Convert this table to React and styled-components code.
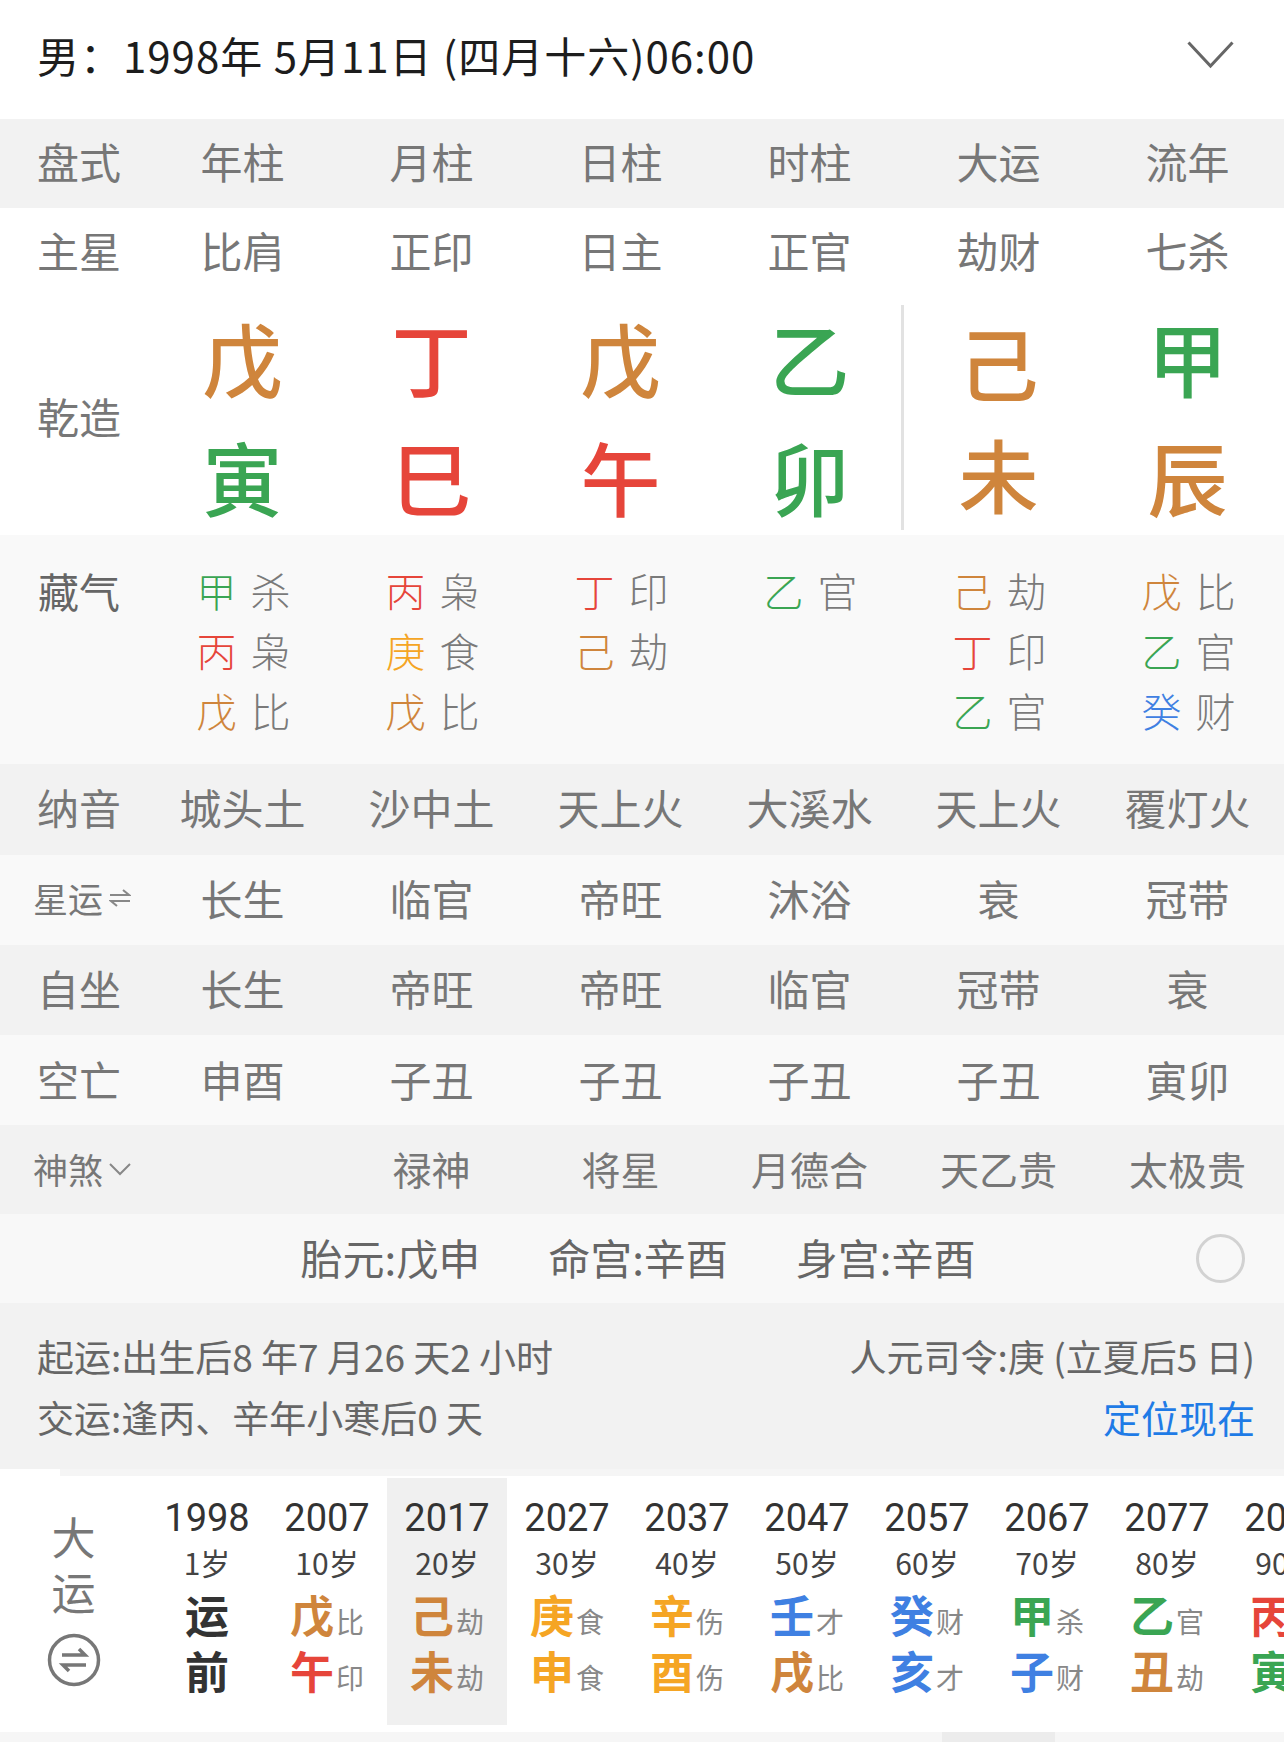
import React from 'react';
import styled, { createGlobalStyle } from 'styled-components';

const GlobalStyle = createGlobalStyle`
  body {
    margin: 0;
    background: #fff;
    font-family: "Noto Sans CJK SC", "Noto Sans", sans-serif;
  }
`;

const COLORS = {
  wood: '#3aa553',
  fire: '#e6453a',
  earth: '#cf853c',
  metal: '#f5a524',
  water: '#3f80e2',
};

const ELEMENT = {
  甲: 'wood', 乙: 'wood', 寅: 'wood', 卯: 'wood',
  丙: 'fire', 丁: 'fire', 巳: 'fire', 午: 'fire',
  戊: 'earth', 己: 'earth', 辰: 'earth', 戌: 'earth', 丑: 'earth', 未: 'earth',
  庚: 'metal', 辛: 'metal', 申: 'metal', 酉: 'metal',
  壬: 'water', 癸: 'water', 子: 'water', 亥: 'water',
};

const colorOf = (ch) => COLORS[ELEMENT[ch]] || '#333';

const Page = styled.div`
  width: 1284px;
  overflow: hidden;
`;

const Header = styled.div`
  height: 119px;
  display: flex;
  align-items: center;
  justify-content: space-between;
  padding: 0 50px 10px 37px;
  box-sizing: border-box;
`;

const Title = styled.div`
  font-size: 42px;
  color: #1d1d1d;
  letter-spacing: 1px;
`;

const Row = styled.div`
  display: grid;
  grid-template-columns: 148px repeat(6, 189px);
  height: ${p => p.$h || 90}px;
  background: ${p => p.$bg || '#fff'};
  align-items: center;
  padding-bottom: ${p => p.$pb ?? 5}px;
  box-sizing: border-box;
`;

const Label = styled.div`
  padding-left: ${p => p.$pl || 10}px;
  text-align: center;
  font-size: ${p => p.$size || 42}px;
  color: ${p => p.$color || '#777'};
  line-height: ${p => p.$lh || 1};
  display: flex;
  align-items: center;
  justify-content: center;
`;

const Cell = styled.div`
  text-align: center;
  font-size: ${p => p.$size || 42}px;
  color: #777;
  line-height: 1;
`;

const Pillars = styled.div`
  display: grid;
  grid-template-columns: 148px repeat(6, 189px);
  height: 238px;
  background: #fff;
`;

const PillarCol = styled.div`
  display: grid;
  grid-template-rows: 117px 121px;
  align-items: center;
  justify-items: center;
  ${p => p.$divider && `
    border-left: 3px solid #e2e2e2;
    margin: 8px 0 5px -3px;
    grid-template-rows: 109px 116px;
  `}
`;

const BigChar = styled.div`
  font-size: 80px;
  font-weight: 500;
  line-height: 1;
  color: ${p => p.$color};
`;

const Hidden = styled.div`
  display: grid;
  grid-template-columns: 148px repeat(6, 189px);
  height: 229px;
  background: #f9f9f9;
  padding-top: 25px;
  box-sizing: border-box;
  align-items: start;
`;

const HiddenList = styled.div`
  display: flex;
  flex-direction: column;
  align-items: center;
`;

const HiddenLine = styled.div`
  font-size: 40px;
  line-height: 60px;
  color: #7a7a7a;
  font-weight: 300;
  padding-left: 2px;
`;

const HiddenStem = styled.span`
  color: ${p => p.$color};
  margin-right: 14px;
`;

const IconInline = styled.svg`
  margin-left: 6px;
  flex-shrink: 0;
`;

const InfoRow = styled.div`
  display: grid;
  grid-template-columns: 1fr auto 1fr;
  align-items: center;
  height: 89px;
  background: #f8f8f8;
`;

const InfoGroup = styled.div`
  grid-column: 2;
  display: flex;
  gap: 68px;
  font-size: 42px;
  color: #666;
  padding-bottom: 4px;
  margin-left: -8px;
`;

const Toggle = styled.div`
  justify-self: end;
  margin-right: 39px;
  width: 49px;
  height: 49px;
  border: 3px solid #d2d2d2;
  border-radius: 50%;
  box-sizing: border-box;
`;

const Luck = styled.div`
  height: 166px;
  background: #f2f2f2;
  padding: 31px 29px 0 37px;
  box-sizing: border-box;
  color: #666;
  font-size: 37px;
`;

const LuckLine = styled.div`
  display: flex;
  justify-content: space-between;
  align-items: baseline;
  line-height: 44px;
  margin-top: ${p => p.$mt || 0}px;
`;

const Locate = styled.span`
  color: #1f7be6;
  font-size: 38px;
`;

const Dayun = styled.div`
  height: 256px;
  background: #fff;
`;

const DayunStrip = styled.div`
  height: 7px;
  background: #f5f5f5;
  display: flex;
`;

const StripWhite = styled.div`
  width: 60px;
  background: #fff;
`;

const DayunBody = styled.div`
  display: flex;
  height: 249px;
`;

const DayunLabel = styled.div`
  width: 147px;
  flex-shrink: 0;
  display: flex;
  flex-direction: column;
  align-items: center;
  padding-top: 38px;
  box-sizing: border-box;
`;

const DayunLabelChar = styled.div`
  font-size: 44px;
  line-height: 44px;
  color: #777;
  margin-bottom: ${p => p.$mb || 0}px;
`;

const CircleIcon = styled.svg`
  margin-top: 20px;
`;

const DayunScroll = styled.div`
  display: flex;
  overflow: hidden;
  flex: 1;
`;

const DayunCol = styled.div`
  width: 120px;
  flex-shrink: 0;
  margin-top: 2px;
  display: flex;
  flex-direction: column;
  align-items: center;
  background: ${p => (p.$active ? '#f0f0f0' : 'transparent')};
  padding-top: 18px;
  box-sizing: border-box;
`;

const Year = styled.div`
  font-family: Roboto, "Noto Sans CJK SC", sans-serif;
  font-size: 38px;
  line-height: 44px;
  color: #333;
`;

const Age = styled.div`
  font-size: 30px;
  line-height: 44px;
  color: #444;
`;

const GanZhi = styled.div`
  display: flex;
  align-items: baseline;
  justify-content: center;
  height: 56px;
  padding-top: 6px;
  box-sizing: border-box;
  margin-top: ${p => p.$mt || 0}px;
`;

const GanChar = styled.span`
  font-size: 44px;
  line-height: 1;
  font-weight: 700;
  color: ${p => p.$color};
`;

const GodChar = styled.span`
  font-size: 28px;
  line-height: 1;
  color: #888;
  margin-left: 2px;
`;

const Bottom = styled.div`
  height: 17px;
  background: #f6f6f6;
`;

const BottomBar = styled.div`
  margin-left: 942px;
  margin-top: 7px;
  width: 113px;
  height: 10px;
  background: #ececec;
`;

const Chevron = () => (
  <svg width="47" height="28" viewBox="0 0 47 28">
    <polyline points="1.5,1.5 23.5,25 45.5,1.5" fill="none" stroke="#666" strokeWidth="3" />
  </svg>
);

const SwapIcon = () => (
  <IconInline width="22" height="20" viewBox="0 0 22 20">
    <path d="M1 7 H20 L14 2" fill="none" stroke="#888" strokeWidth="2" />
    <path d="M21 13 H2 L8 18" fill="none" stroke="#888" strokeWidth="2" />
  </IconInline>
);

const DownIcon = () => (
  <IconInline width="22" height="14" viewBox="0 0 22 14">
    <polyline points="1,2 11,12 21,2" fill="none" stroke="#888" strokeWidth="2" />
  </IconInline>
);

const headers = ['年柱', '月柱', '日柱', '时柱', '大运', '流年'];
const mainStars = ['比肩', '正印', '日主', '正官', '劫财', '七杀'];
const stems = ['戊', '丁', '戊', '乙', '己', '甲'];
const branches = ['寅', '巳', '午', '卯', '未', '辰'];
const hidden = [
  [['甲', '杀'], ['丙', '枭'], ['戊', '比']],
  [['丙', '枭'], ['庚', '食'], ['戊', '比']],
  [['丁', '印'], ['己', '劫']],
  [['乙', '官']],
  [['己', '劫'], ['丁', '印'], ['乙', '官']],
  [['戊', '比'], ['乙', '官'], ['癸', '财']],
];

const tableRows = [
  { label: '纳音', bg: '#f2f2f2', h: 91, values: ['城头土', '沙中土', '天上火', '大溪水', '天上火', '覆灯火'] },
  { label: '星运', icon: 'swap', bg: '#f9f9f9', values: ['长生', '临官', '帝旺', '沐浴', '衰', '冠带'] },
  { label: '自坐', bg: '#f2f2f2', values: ['长生', '帝旺', '帝旺', '临官', '冠带', '衰'] },
  { label: '空亡', bg: '#f9f9f9', pb: 3, values: ['申酉', '子丑', '子丑', '子丑', '子丑', '寅卯'] },
  { label: '神煞', icon: 'down', bg: '#f2f2f2', h: 89, pb: 2, size: 39, values: ['', '禄神', '将星', '月德合', '天乙贵', '太极贵'] },
];

const dayun = [
  { year: '1998', age: '1岁', pre: true },
  { year: '2007', age: '10岁', gan: ['戊', '比'], zhi: ['午', '印'] },
  { year: '2017', age: '20岁', gan: ['己', '劫'], zhi: ['未', '劫'], active: true },
  { year: '2027', age: '30岁', gan: ['庚', '食'], zhi: ['申', '食'] },
  { year: '2037', age: '40岁', gan: ['辛', '伤'], zhi: ['酉', '伤'] },
  { year: '2047', age: '50岁', gan: ['壬', '才'], zhi: ['戌', '比'] },
  { year: '2057', age: '60岁', gan: ['癸', '财'], zhi: ['亥', '才'] },
  { year: '2067', age: '70岁', gan: ['甲', '杀'], zhi: ['子', '财'] },
  { year: '2077', age: '80岁', gan: ['乙', '官'], zhi: ['丑', '劫'] },
  { year: '2087', age: '90岁', gan: ['丙', '枭'], zhi: ['寅', '枭'] },
];

export default function App() {
  return (
    <Page>
      <GlobalStyle />
      <Header>
        <Title>男：1998年 5月11日 (四月十六)06:00</Title>
        <Chevron />
      </Header>

      <Row $bg="#f2f2f2" $h={89}>
        <Label>盘式</Label>
        {headers.map(h => <Cell key={h}>{h}</Cell>)}
      </Row>

      <Row $h={89}>
        <Label>主星</Label>
        {mainStars.map((s, i) => <Cell key={i}>{s}</Cell>)}
      </Row>

      <Pillars>
        <Label>乾造</Label>
        {stems.map((s, i) => (
          <PillarCol key={i} $divider={i === 4}>
            <BigChar $color={colorOf(s)}>{s}</BigChar>
            <BigChar $color={colorOf(branches[i])}>{branches[i]}</BigChar>
          </PillarCol>
        ))}
      </Pillars>

      <Hidden>
        <Label $color="#666" $lh="60px" $size={41}>藏气</Label>
        {hidden.map((list, i) => (
          <HiddenList key={i}>
            {list.map(([stem, god], j) => (
              <HiddenLine key={j}>
                <HiddenStem $color={colorOf(stem)}>{stem}</HiddenStem>{god}
              </HiddenLine>
            ))}
          </HiddenList>
        ))}
      </Hidden>

      {tableRows.map(r => (
        <Row key={r.label} $bg={r.bg} $h={r.h || 90} $pb={r.pb}>
          <Label $size={r.icon ? 35 : 42} $pl={r.icon ? 16 : 10}>
            {r.label}
            {r.icon === 'swap' && <SwapIcon />}
            {r.icon === 'down' && <DownIcon />}
          </Label>
          {r.values.map((v, i) => <Cell key={i} $size={r.size}>{v}</Cell>)}
        </Row>
      ))}

      <InfoRow>
        <InfoGroup>
          <span>胎元:戊申</span>
          <span>命宫:辛酉</span>
          <span>身宫:辛酉</span>
        </InfoGroup>
        <Toggle />
      </InfoRow>

      <Luck>
        <LuckLine>
          <span>起运:出生后8 年7 月26 天2 小时</span>
          <span>人元司令:庚 (立夏后5 日)</span>
        </LuckLine>
        <LuckLine $mt={17}>
          <span>交运:逢丙、辛年小寒后0 天</span>
          <Locate>定位现在</Locate>
        </LuckLine>
      </Luck>

      <Dayun>
        <DayunStrip><StripWhite /></DayunStrip>
        <DayunBody>
          <DayunLabel>
            <DayunLabelChar $mb={11}>大</DayunLabelChar>
            <DayunLabelChar>运</DayunLabelChar>
            <CircleIcon width="54" height="54" viewBox="0 0 54 54">
              <circle cx="27" cy="27" r="24.5" fill="none" stroke="#777" strokeWidth="3.5" />
              <path d="M15 22 H38 L32 16" fill="none" stroke="#777" strokeWidth="3.5" />
              <path d="M39 32 H16 L22 38" fill="none" stroke="#777" strokeWidth="3.5" />
            </CircleIcon>
          </DayunLabel>
          <DayunScroll>
            {dayun.map(d => (
              <DayunCol key={d.year} $active={d.active}>
                <Year>{d.year}</Year>
                <Age>{d.age}</Age>
                {d.pre ? (
                  <>
                    <GanZhi $mt={2}><GanChar $color="#333">运</GanChar></GanZhi>
                    <GanZhi><GanChar $color="#333">前</GanChar></GanZhi>
                  </>
                ) : (
                  <>
                    <GanZhi $mt={2}>
                      <GanChar $color={colorOf(d.gan[0])}>{d.gan[0]}</GanChar>
                      <GodChar>{d.gan[1]}</GodChar>
                    </GanZhi>
                    <GanZhi>
                      <GanChar $color={colorOf(d.zhi[0])}>{d.zhi[0]}</GanChar>
                      <GodChar>{d.zhi[1]}</GodChar>
                    </GanZhi>
                  </>
                )}
              </DayunCol>
            ))}
          </DayunScroll>
        </DayunBody>
      </Dayun>

      <Bottom>
        <BottomBar />
      </Bottom>
    </Page>
  );
}
